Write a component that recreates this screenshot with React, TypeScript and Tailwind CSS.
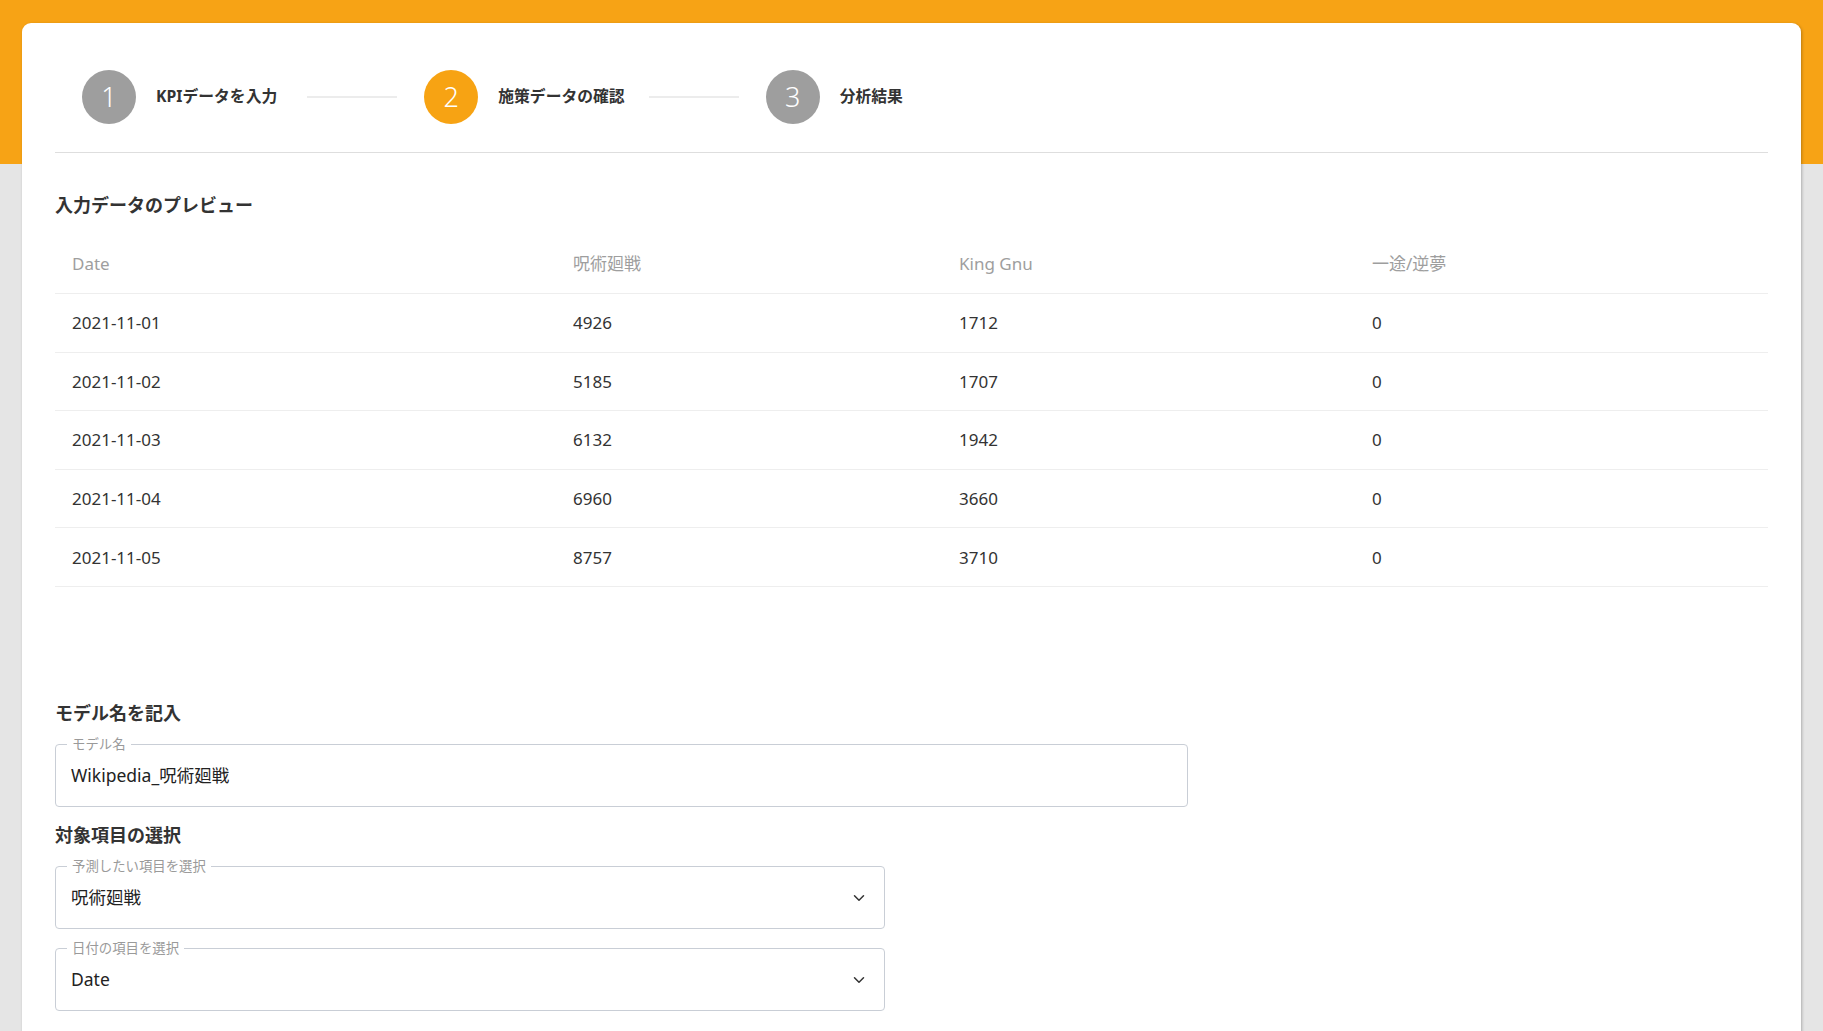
import { ChevronDown } from "lucide-react";

const steps = [
  { n: "1", label: "KPIデータを入力", active: false },
  { n: "2", label: "施策データの確認", active: true },
  { n: "3", label: "分析結果", active: false },
];

const columns = [
  { key: "date", title: "Date", width: "w-[501px]" },
  { key: "a", title: "呪術廻戦", width: "w-[386px]" },
  { key: "b", title: "King Gnu", width: "w-[413px]" },
  { key: "c", title: "一途/逆夢", width: "" },
];

const rows = [
  ["2021-11-01", "4926", "1712", "0"],
  ["2021-11-02", "5185", "1707", "0"],
  ["2021-11-03", "6132", "1942", "0"],
  ["2021-11-04", "6960", "3660", "0"],
  ["2021-11-05", "8757", "3710", "0"],
];

function Outlined({
  label,
  value,
  select,
  width,
}: {
  label: string;
  value: string;
  select?: boolean;
  width: string;
}) {
  return (
    <div
      className={`relative ${width} h-[63px] rounded-[4px] border border-[#c9ced6] flex items-center pl-[15px] pr-[16px]`}
    >
      <span className="absolute left-[11px] -top-[10px] bg-white px-[5px] text-[13.4px] leading-[18px] text-[#9a9a9a]">
        {label}
      </span>
      <span className="flex-1 text-[17.5px] text-[#222]">{value}</span>
      {select && <ChevronDown size={18} strokeWidth={2} className="text-[#333]" />}
    </div>
  );
}

export default function App() {
  return (
    <div
      className="min-h-screen bg-[linear-gradient(to_bottom,#f7a315_164px,#e5e5e5_164px)] px-[22px] pt-[23px] pb-[40px]"
      style={{ fontFamily: '"Noto Sans", "Noto Sans CJK JP", sans-serif' }}
    >
      <div className="bg-white rounded-[9px] shadow-[1px_1px_3px_rgba(0,0,0,0.25)] px-[33px] pb-[60px]">
        {/* Stepper */}
        <div className="flex items-center pl-[27px] pt-[47px] pb-[28px] border-b border-[#dedede]">
          {steps.map((s, i) => (
            <div key={s.n} className="flex items-center">
              {i > 0 && (
                <div
                  className={`w-[90px] h-[2px] bg-[#ececec] mr-[27px] ${i === 1 ? "ml-[27px]" : "ml-[24px]"}`}
                />
              )}
              <div
                className={`w-[54px] h-[54px] rounded-full flex items-center justify-center text-white text-[27px] font-light ${
                  s.active ? "bg-[#f7a313]" : "bg-[#9e9e9e]"
                }`}
              >
                {s.n}
              </div>
              <span
                className={`ml-[20px] text-[15.8px] font-bold text-[#333] ${i === 0 ? "pr-[3px]" : ""}`}
              >
                {s.label}
              </span>
            </div>
          ))}
        </div>

        {/* Preview */}
        <h2 className="mt-[40px] text-[18px] leading-[24px] font-bold text-[#333]">
          入力データのプレビュー
        </h2>
        <table className="mt-[18px] w-full border-collapse text-[17px]">
          <thead>
            <tr className="h-[58.6px] border-b border-[#eeeeee]">
              {columns.map((c) => (
                <th key={c.key} className={`${c.width} pl-[17px] text-left font-normal text-[#9e9e9e]`}>
                  {c.title}
                </th>
              ))}
            </tr>
          </thead>
          <tbody>
            {rows.map((r) => (
              <tr key={r[0]} className="h-[58.6px] border-b border-[#eeeeee]">
                {r.map((v, j) => (
                  <td key={j} className="pl-[17px] text-[#333]">
                    {v}
                  </td>
                ))}
              </tr>
            ))}
          </tbody>
        </table>

        {/* Model name */}
        <h2 className="mt-[114px] text-[18px] leading-[24px] font-bold text-[#333]">モデル名を記入</h2>
        <div className="mt-[19px]">
          <Outlined label="モデル名" value="Wikipedia_呪術廻戦" width="w-[1133px]" />
        </div>

        {/* Target */}
        <h2 className="mt-[16px] text-[18px] leading-[24px] font-bold text-[#333]">対象項目の選択</h2>
        <div className="mt-[19px] flex flex-col gap-[19px]">
          <Outlined label="予測したい項目を選択" value="呪術廻戦" select width="w-[830px]" />
          <Outlined label="日付の項目を選択" value="Date" select width="w-[830px]" />
        </div>
      </div>
    </div>
  );
}
